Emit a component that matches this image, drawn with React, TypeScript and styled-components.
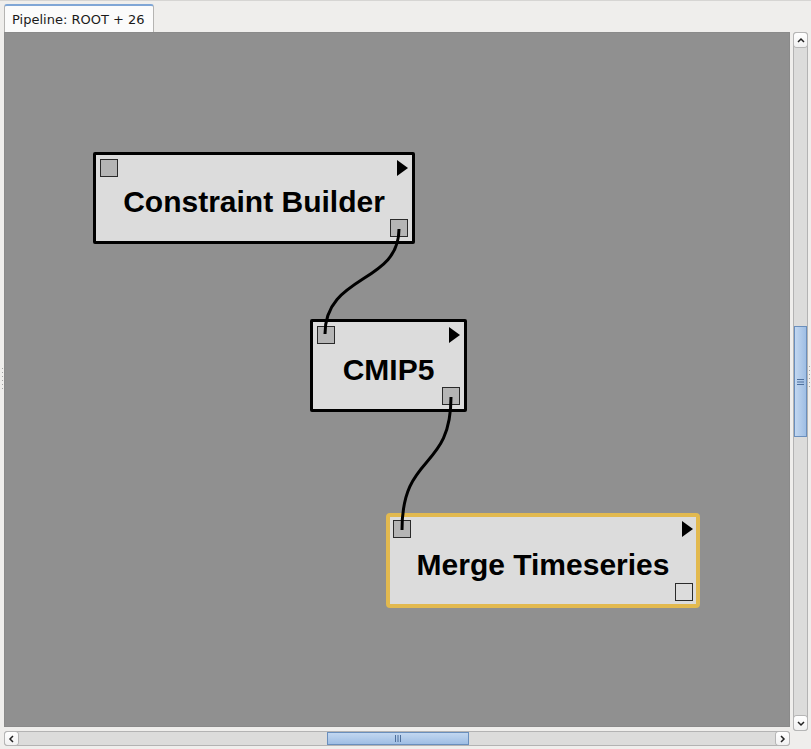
import styled, { createGlobalStyle } from 'styled-components';

const GlobalStyle = createGlobalStyle`
  html, body {
    margin: 0;
    padding: 0;
    background: #efeeec;
  }
  body {
    font-family: "DejaVu Sans", sans-serif;
  }
`;

type NodeData = {
  id: string;
  label: string;
  x: number;
  y: number;
  w: number;
  h: number;
  selected?: boolean;
  outputFilled?: boolean;
};

const nodes: NodeData[] = [
  { id: 'cb', label: 'Constraint Builder', x: 89, y: 120, w: 322, h: 92, outputFilled: true },
  { id: 'cmip', label: 'CMIP5', x: 306, y: 287, w: 157, h: 93, outputFilled: true },
  { id: 'merge', label: 'Merge Timeseries', x: 382, y: 481, w: 314, h: 95, selected: true },
];

const edges = [
  'M395 197 C395 252, 321 242, 321 302',
  'M447 365 C447 440, 398 420, 398 498',
];

const Window = styled.div`
  width: 811px;
  height: 749px;
  display: flex;
  flex-direction: column;
  overflow: hidden;
  border-top: 1px solid #d6d5d3;
  box-sizing: border-box;
`;

const TabStrip = styled.div`
  height: 31px;
  display: flex;
  align-items: flex-end;
  padding-left: 4px;
`;

const Tab = styled.div`
  height: 28px;
  padding: 0 7px 0 7px;
  display: flex;
  align-items: center;
  background: #fbfbfb;
  border: 1px solid #b5b4b2;
  border-top: 2px solid #7fa6d6;
  border-bottom: none;
  border-radius: 3px 3px 0 0;
  font-size: 13px;
  color: #1a1a1a;
  box-sizing: border-box;
  width: 150px;
`;

const Body = styled.div`
  display: flex;
  flex: 1;
`;

const Margin = styled.div<{ $w: number; $top: number }>`
  width: ${p => p.$w}px;
  display: flex;
  flex-direction: column;
  align-items: center;
  padding-top: ${p => p.$top}px;
  box-sizing: border-box;
`;

const Grip = styled.div`
  display: flex;
  flex-direction: column;
  gap: 3px;
`;

const GripDot = styled.span`
  width: 1px;
  height: 1px;
  background: #a5a5a5;
`;

const Main = styled.div`
  display: flex;
  flex-direction: column;
  width: 786px;
`;

const Canvas = styled.div`
  position: relative;
  width: 786px;
  height: 695px;
  background: #909090;
  box-shadow: inset 0 0 0 1px #8a8a8a;
  overflow: hidden;
`;

const NodeBox = styled.div<{ $selected?: boolean }>`
  position: absolute;
  box-sizing: border-box;
  background: #dcdcdc;
  border: ${p => (p.$selected ? '4px solid #e2b94f' : '3px solid #000')};
  border-radius: ${p => (p.$selected ? '4px' : '2px')};
  padding: ${p => (p.$selected ? '3px' : '4px')};
  display: grid;
  grid-template-rows: 18px 1fr 18px;
`;

const PortRow = styled.div`
  display: flex;
  justify-content: space-between;
  align-items: flex-start;
`;

const BottomRow = styled.div`
  display: flex;
  justify-content: flex-end;
`;

const Port = styled.div<{ $filled?: boolean }>`
  width: 18px;
  height: 18px;
  box-sizing: border-box;
  border: 1.5px solid #2a2a2a;
  background: ${p => (p.$filled ? '#b5b5b5' : '#dcdcdc')};
`;

const Label = styled.div`
  display: flex;
  align-items: center;
  justify-content: center;
  font-family: "Liberation Sans", Arial, sans-serif;
  font-weight: bold;
  font-size: 30px;
  color: #000;
  padding-top: 8px;
`;

const EdgeLayer = styled.svg`
  position: absolute;
  left: 0;
  top: 0;
  pointer-events: none;
`;

const HScroll = styled.div`
  margin-top: 4px;
  height: 15px;
  display: flex;
  background: #dcdcdb;
  border: 1px solid #b3b3b3;
  border-radius: 3px;
  box-sizing: border-box;
`;

const VScroll = styled.div`
  margin-left: 3px;
  width: 15px;
  height: 699px;
  display: flex;
  flex-direction: column;
  background: #dcdcdb;
  border: 1px solid #b3b3b3;
  border-radius: 3px;
  box-sizing: border-box;
`;

const ArrowButton = styled.div<{ $vertical?: boolean }>`
  ${p => (p.$vertical ? 'height: 14px;' : 'width: 13px;')}
  flex: none;
  display: flex;
  align-items: center;
  justify-content: center;
  background: linear-gradient(#ffffff, #f1f1f1);
  border-radius: 3px;
  box-shadow: 0 0 0 1px #b6b6b6;
`;

const Track = styled.div<{ $vertical?: boolean }>`
  flex: 1;
  display: flex;
  flex-direction: ${p => (p.$vertical ? 'column' : 'row')};
`;

const Thumb = styled.div<{ $vertical?: boolean; $offset: number; $size: number }>`
  ${p =>
    p.$vertical
      ? `margin-top: ${p.$offset}px; height: ${p.$size}px;`
      : `margin-left: ${p.$offset}px; width: ${p.$size}px;`}
  flex: none;
  box-sizing: border-box;
  border: 1px solid #6a8fbd;
  background: linear-gradient(
    ${p => (p.$vertical ? '90deg' : '180deg')},
    #c2d7f0,
    #9fbee4
  );
  display: flex;
  align-items: center;
  justify-content: center;
`;

const GripLines = styled.svg`
  display: block;
`;

const Chevron = ({ dir }: { dir: 'up' | 'down' | 'left' | 'right' }) => {
  const pts = {
    up: '1,5 4,2 7,5',
    down: '1,2 4,5 7,2',
    left: '5,1 2,4 5,7',
    right: '2,1 5,4 2,7',
  }[dir];
  const w = dir === 'up' || dir === 'down' ? 8 : 7;
  const h = dir === 'up' || dir === 'down' ? 7 : 8;
  return (
    <svg width={w} height={h} viewBox={`0 0 ${w} ${h}`}>
      <polyline points={pts} fill="none" stroke="#222" strokeWidth="1.5" />
    </svg>
  );
};

const Node = ({ node }: { node: NodeData }) => (
  <NodeBox
    $selected={node.selected}
    style={{ left: node.x, top: node.y, width: node.w, height: node.h }}
  >
    <PortRow>
      <Port $filled />
      <svg width="11" height="18" viewBox="0 0 11 18">
        <polygon points="0,1 11,9 0,17" fill="#000" />
      </svg>
    </PortRow>
    <Label>{node.label}</Label>
    <BottomRow>
      <Port $filled={node.outputFilled} />
    </BottomRow>
  </NodeBox>
);

const GripDots = ({ count }: { count: number }) => (
  <Grip>
    {Array.from({ length: count }).map((_, i) => (
      <GripDot key={i} />
    ))}
  </Grip>
);

export default function App() {
  return (
    <>
      <GlobalStyle />
      <Window>
        <TabStrip>
          <Tab>Pipeline: ROOT + 26</Tab>
        </TabStrip>
        <Body>
          <Margin $w={4} $top={336}>
            <GripDots count={6} />
          </Margin>
          <Main>
            <Canvas>
              {nodes.map(n => (
                <Node key={n.id} node={n} />
              ))}
              <EdgeLayer width="786" height="695">
                {edges.map((d, i) => (
                  <path key={i} d={d} fill="none" stroke="#000" strokeWidth="3" />
                ))}
              </EdgeLayer>
            </Canvas>
            <HScroll>
              <ArrowButton>
                <Chevron dir="left" />
              </ArrowButton>
              <Track>
                <Thumb $offset={309} $size={142}>
                  <GripLines width="8" height="7" viewBox="0 0 8 7">
                    <path d="M1.5 0V7M4 0V7M6.5 0V7" stroke="#4d6f9c" strokeWidth="1" />
                  </GripLines>
                </Thumb>
              </Track>
              <ArrowButton>
                <Chevron dir="right" />
              </ArrowButton>
            </HScroll>
          </Main>
          <VScroll>
            <ArrowButton $vertical>
              <Chevron dir="up" />
            </ArrowButton>
            <Track $vertical>
              <Thumb $vertical $offset={279} $size={111}>
                <GripLines width="7" height="8" viewBox="0 0 7 8">
                  <path d="M0 1.5H7M0 4H7M0 6.5H7" stroke="#4d6f9c" strokeWidth="1" />
                </GripLines>
              </Thumb>
            </Track>
            <ArrowButton $vertical>
              <Chevron dir="down" />
            </ArrowButton>
          </VScroll>
          <Margin $w={3} $top={334}>
            <GripDots count={6} />
          </Margin>
        </Body>
      </Window>
    </>
  );
}
